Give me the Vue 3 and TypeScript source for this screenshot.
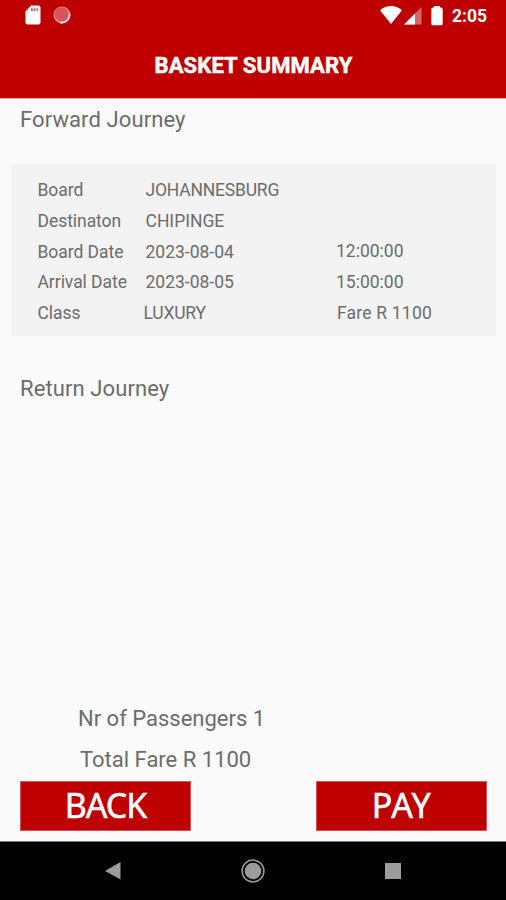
<script setup lang="ts">
interface JourneyRow {
  label: string
  value: string
  extra?: string
  kind: string
}

const forwardRows: JourneyRow[] = [
  { label: 'Board', value: 'JOHANNESBURG', kind: 'board' },
  { label: 'Destinaton', value: 'CHIPINGE', kind: 'destination' },
  { label: 'Board Date', value: '2023-08-04', extra: '12:00:00', kind: 'departure' },
  { label: 'Arrival Date', value: '2023-08-05', extra: '15:00:00', kind: 'arrival' },
  { label: 'Class', value: 'LUXURY', extra: 'Fare R 1100', kind: 'class' },
]
</script>

<template>
  <div class="screen">
    <header class="app-header">
      <div class="status-bar">
        <div class="status-left">
          <svg class="sd-icon" width="16" height="20" viewBox="0 0 16 20">
            <path d="M6 .5h7.500Q15.500 .5 15.500 2.500v15q0 2-2 2h-11q-2 0-2-2V6.500z" fill="#fff" />
            <path d="M6 3.300h1.700v2.700H6zM8.700 3.300h1.600v2.700H8.700zM11.300 3.300h1.500v2.700h-1.500z" fill="#c85050" />
          </svg>
          <svg class="sync-icon" width="18" height="18" viewBox="0 0 18 18">
            <circle cx="9" cy="9" r="8.500" fill="#e58a8d" />
            <circle cx="8.500" cy="8.300" r="7" fill="#d9535a" />
            <path d="M16.400 7.500A7.700 7.700 0 0 1 7 16.400" fill="none" stroke="#ffe9e9" stroke-width="1.500" />
          </svg>
        </div>
        <div class="status-right">
          <svg class="wifi-icon" width="22" height="18" viewBox="0 0 22 18">
            <path d="M0 4.200Q11-4.200 22 4.200L11 18z" fill="#fff" />
          </svg>
          <svg class="signal-icon" width="18" height="18" viewBox="0 0 18 18">
            <path d="M17.500 0v17.500H0z" fill="#d96666" />
            <path d="M11 6.500v11H0z" fill="#fff" />
          </svg>
          <svg class="battery-icon" width="12" height="20" viewBox="0 0 12 20">
            <path d="M3 0h6v1.500h1q1.700 0 1.700 1.700v14.500Q11.700 19.300 10 19.300H2Q.3 19.300.3 17.700V3.200Q.3 1.500 2 1.500h1z" fill="#fff" />
          </svg>
          <span class="clock">2:05</span>
        </div>
      </div>
      <h1 class="title">BASKET SUMMARY</h1>
    </header>

    <main class="content">
      <h2 class="section-title forward">Forward Journey</h2>
      <section class="journey-card">
        <div v-for="row in forwardRows" :key="row.kind" class="journey-row" :class="row.kind">
          <span class="label">{{ row.label }}</span>
          <span class="value">{{ row.value }}</span>
          <span class="extra">{{ row.extra }}</span>
        </div>
      </section>
      <h2 class="section-title">Return Journey</h2>

      <div class="totals">
        <p class="passengers">Nr of Passengers 1</p>
        <p class="fare">Total Fare R 1100</p>
      </div>
      <div class="actions">
        <button class="action back" type="button">BACK</button>
        <button class="action pay" type="button">PAY</button>
      </div>
    </main>

    <nav class="nav-bar">
      <svg width="16" height="18" viewBox="0 0 16 18"><path d="M15.500 0v17.500L0 9z" fill="#9c9c9c" /></svg>
      <svg width="24" height="24" viewBox="0 0 24 24">
        <circle cx="12" cy="12" r="10.900" fill="none" stroke="#9c9c9c" stroke-width="1.500" />
        <circle cx="12" cy="12" r="8.300" fill="#9c9c9c" />
      </svg>
      <svg width="16" height="16" viewBox="0 0 16 16"><path d="M0 0h16v16H0z" fill="#9c9c9c" /></svg>
    </nav>
  </div>
</template>

<style>
body {
  margin: 0;
}
</style>

<style scoped>
.screen {
  display: flex;
  flex-direction: column;
  width: 506px;
  height: 900px;
  overflow: hidden;
  background: #fafafa;
  color: #6c6c6c;
  font-family: Roboto, "Liberation Sans", sans-serif;
}

.app-header {
  flex: none;
  height: 99px;
  background: #bf0000;
  color: #fff;
  border-bottom: 1px solid #e9a5a5;
  box-sizing: border-box;
}

.status-bar {
  display: flex;
  justify-content: space-between;
  height: 32px;
  padding: 0 18px 0 25px;
}

.status-left,
.status-right {
  display: flex;
  align-items: flex-start;
}

.sd-icon {
  margin-top: 5px;
}

.sync-icon {
  margin: 6px 0 0 12px;
}

.wifi-icon {
  margin-top: 6px;
}

.signal-icon {
  margin: 7px 0 0 2px;
}

.battery-icon {
  margin: 6px 9px 0 9px;
}

.clock {
  width: 36px;
  font-size: 17.5px;
  font-weight: 700;
  line-height: 32px;
}

.title {
  margin: 0;
  padding-left: 1px;
  font-size: 22px;
  font-weight: 700;
  letter-spacing: 0.12px;
  line-height: 68px;
  text-align: center;
  -webkit-text-stroke: 0.5px #fff;
}

.content {
  display: flex;
  flex: 1;
  flex-direction: column;
}

.section-title {
  margin: 0 20px;
  font-size: 22px;
  font-weight: 400;
  letter-spacing: 0.1px;
  line-height: 30px;
}

.forward {
  margin-top: 6px;
}

.journey-card {
  display: flex;
  flex-direction: column;
  height: 172px;
  margin: 29px 10px 38px 11px;
  padding: 11px 0 0 26.500px;
  box-sizing: border-box;
  background: #f3f3f3;
}

.journey-row {
  display: grid;
  grid-template-columns: 108px 190.500px 1fr;
  height: 30.8px;
  font-size: 17.5px;
  line-height: 31px;
}

.label {
  letter-spacing: -0.05px;
}

.board .value {
  letter-spacing: -0.2px;
}

.departure .extra {
  line-height: 29px;
}

.class .value {
  margin-left: -2px;
  letter-spacing: -0.2px;
}

.class .extra {
  padding-left: 1px;
  letter-spacing: 0.2px;
}

.totals {
  margin-top: auto;
  font-size: 22px;
}

.totals p {
  margin: 0;
  line-height: 41px;
}

.passengers {
  padding-left: 78px;
}

.fare {
  padding-left: 80px;
}

.actions {
  display: flex;
  justify-content: space-between;
  padding: 1px 19px 10px 20px;
}

.action {
  width: 171px;
  height: 50px;
  padding: 0;
  border: 1px solid #d65454;
  background: #bf0000;
  color: #fff;
  font-family: "Noto Sans", "Open Sans", sans-serif;
  font-size: 34px;
  line-height: 46px;
  -webkit-text-stroke: 0.5px #fff;
}

.back {
  padding-bottom: 2px;
  letter-spacing: -1px;
}

.pay {
  padding-bottom: 4px;
  letter-spacing: 0.5px;
}

.nav-bar {
  display: flex;
  flex: none;
  align-items: center;
  justify-content: space-between;
  height: 59px;
  padding: 0 105px;
  box-sizing: border-box;
  border-top: 1px solid #777;
  background: #000;
}
</style>
